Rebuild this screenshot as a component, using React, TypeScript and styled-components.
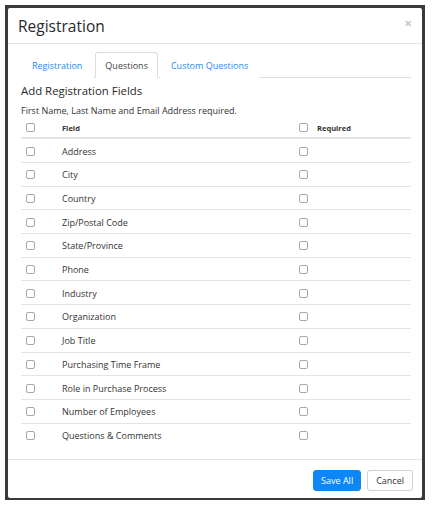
import React from "react";
import styled, { createGlobalStyle } from "styled-components";

const GlobalStyle = createGlobalStyle`
  html, body { margin: 0; padding: 0; background: #ffffff; }
  body { font-family: "Open Sans", "Liberation Sans", sans-serif; color: #333; }
  * { box-sizing: border-box; }
`;

const Backdrop = styled.div`
  margin: 5px 0 0 5px;
  width: 420px;
  height: 495px;
  background: #3a3a3a;
  padding: 3px 3px 2px 3px;
`;

const Modal = styled.div`
  width: 100%;
  height: 100%;
  background: #fff;
  border-radius: 2px;
  display: flex;
  flex-direction: column;
`;

const Header = styled.div`
  height: 36px;
  border-bottom: 1px solid #e5e5e5;
  display: flex;
  align-items: center;
  justify-content: space-between;
  padding: 0 10px 0 10px;
`;

const Title = styled.h1`
  margin: 0;
  font-size: 15.5px;
  font-weight: 400;
  color: #2a2a2a;
`;

const Close = styled.span`
  font-size: 13px;
  font-weight: 700;
  color: #c4c4c4;
  margin-top: -6px;
`;

const Body = styled.div`
  flex: 1;
  padding: 8px 11px 0 13px;
`;

const Tabs = styled.div`
  display: flex;
  gap: 2px;
  border-bottom: 1px solid #ddd;
  height: 26px;
`;

const Tab = styled.div<{ $active?: boolean }>`
  height: 26px;
  padding: 0 ${(p) => (p.$active ? "9px" : "10px")};
  display: flex;
  align-items: center;
  font-size: 9px;
  color: ${(p) => (p.$active ? "#444" : "#1a8cf0")};
  background: #fff;
  border: 1px solid ${(p) => (p.$active ? "#ddd" : "transparent")};
  border-bottom-color: ${(p) => (p.$active ? "#fff" : "transparent")};
  border-radius: 3px 3px 0 0;
`;

const Heading = styled.h2`
  margin: 4px 0 0 0;
  font-size: 11.4px;
  line-height: 18px;
  font-weight: 400;
  color: #2a2a2a;
`;

const Note = styled.p`
  margin: 4px 0 0 0;
  font-size: 9px;
  line-height: 13px;
  color: #333;
`;

const Row = styled.div<{ $head?: boolean }>`
  display: grid;
  grid-template-columns: 41px 237px 1fr;
  align-items: center;
  padding-top: 1px;
  height: ${(p) => (p.$head ? "22px" : "23.7px")};
  border-top: ${(p) => (p.$head ? "none" : "1px solid #e4e4e4")};
  border-bottom: ${(p) => (p.$head ? "2px solid #e4e4e4" : "none")};
  font-size: ${(p) => (p.$head ? "7.5px" : "9px")};
  font-weight: ${(p) => (p.$head ? 700 : 400)};
  color: #333;
  &:nth-child(2) { border-top: none; height: 23px; }
`;

const CheckCell = styled.div`
  padding-left: 5px;
  display: flex;
  align-items: center;
`;

const ReqCell = styled.div`
  display: flex;
  align-items: center;
  gap: 9px;
`;

const Box = styled.span`
  display: inline-block;
  width: 9px;
  height: 9px;
  border: 1px solid #a8a8a8;
  border-radius: 2px;
  background: #fff;
`;

const Footer = styled.div`
  border-top: 1px solid #e5e5e5;
  padding: 10px 9px 7px 0;
  display: flex;
  justify-content: flex-end;
  gap: 6px;
`;

const Button = styled.button<{ $primary?: boolean }>`
  height: 21px;
  padding: 0 ${(p) => (p.$primary ? "7px" : "8px")};
  font-family: "Open Sans", "Liberation Sans", sans-serif;
  font-size: 9px;
  border-radius: 3px;
  border: 1px solid ${(p) => (p.$primary ? "#0d87f5" : "#d0d0d0")};
  background: ${(p) => (p.$primary ? "#0d87f5" : "#fff")};
  color: ${(p) => (p.$primary ? "#fff" : "#333")};
`;

const fields = [
  "Address",
  "City",
  "Country",
  "Zip/Postal Code",
  "State/Province",
  "Phone",
  "Industry",
  "Organization",
  "Job Title",
  "Purchasing Time Frame",
  "Role in Purchase Process",
  "Number of Employees",
  "Questions & Comments",
];

export default function App() {
  return (
    <>
      <GlobalStyle />
      <Backdrop>
        <Modal>
          <Header>
            <Title>Registration</Title>
            <Close>×</Close>
          </Header>
          <Body>
            <Tabs>
              <Tab>Registration</Tab>
              <Tab $active>Questions</Tab>
              <Tab>Custom Questions</Tab>
            </Tabs>
            <Heading>Add Registration Fields</Heading>
            <Note>First Name, Last Name and Email Address required.</Note>
            <div>
              <Row $head>
                <CheckCell>
                  <Box />
                </CheckCell>
                <div>Field</div>
                <ReqCell>
                  <Box />
                  <span>Required</span>
                </ReqCell>
              </Row>
              {fields.map((f) => (
                <Row key={f}>
                  <CheckCell>
                    <Box />
                  </CheckCell>
                  <div>{f}</div>
                  <ReqCell>
                    <Box />
                  </ReqCell>
                </Row>
              ))}
            </div>
          </Body>
          <Footer>
            <Button $primary>Save All</Button>
            <Button>Cancel</Button>
          </Footer>
        </Modal>
      </Backdrop>
    </>
  );
}
